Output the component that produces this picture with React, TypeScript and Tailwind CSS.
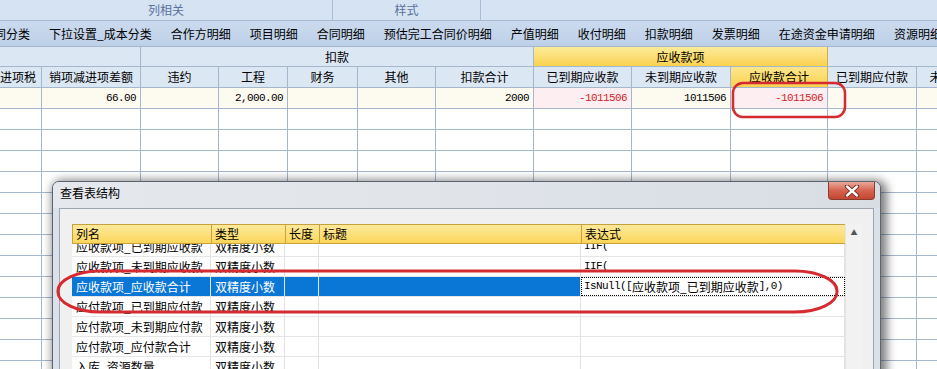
import React from 'react'

const tabs = ['合同分类', '下拉设置_成本分类', '合作方明细', '项目明细', '合同明细', '预估完工合同价明细', '产值明细', '收付明细', '扣款明细', '发票明细', '在途资金申请明细', '资源明细']

const colW = ['w-[42px]', 'w-[99px]', 'w-[78px]', 'w-[69px]', 'w-[70px]', 'w-[78px]', 'w-[98px]', 'w-[98px]', 'w-[99px]', 'w-[97px]', 'w-[89px]', 'w-[98px]']

const heads = ['进项税', '销项减进项差额', '违约', '工程', '财务', '其他', '扣款合计', '已到期应收款', '未到期应收款', '应收款合计', '已到期应付款', '未到期应付款']

const dataRow: { v: string; red?: boolean; pink?: boolean }[] = [
  { v: '' },
  { v: '66.00' },
  { v: '' },
  { v: '2,000.00' },
  { v: '' },
  { v: '' },
  { v: '2000' },
  { v: '-1011506', red: true, pink: true },
  { v: '1011506' },
  { v: '-1011506', red: true, pink: true },
  { v: '' },
  { v: '' },
]

const dlgW = ['w-[139px]', 'w-[74px]', 'w-[34px]', 'w-[262px]', 'w-[264px]']

const fields = [
  { name: '应收款项_已到期应收款', expr: 'IIF(' },
  { name: '应收款项_未到期应收款', expr: 'IIF(' },
  { name: '应收款项_应收款合计', expr: 'sel' },
  { name: '应付款项_已到期应付款', expr: '' },
  { name: '应付款项_未到期应付款', expr: '' },
  { name: '应付款项_应付款合计', expr: '' },
  { name: '入库_资源数量', expr: '' },
]

const mono = "font-['Liberation_Mono',monospace] text-[11px] tracking-[-0.6px]"

function Sheet() {
  return (
    <div className="flex flex-col">
      {/* column group band */}
      <div className="flex h-[20px] bg-[#d6e3f3] text-[#5a729c]">
        <div className="w-[333px] flex items-center justify-center border-r border-[#aabdd6]">列相关</div>
        <div className="w-[148px] flex items-center justify-center border-r border-[#aabdd6]">样式</div>
        <div className="flex-1" />
      </div>

      {/* sheet tabs */}
      <div className="flex items-center gap-[19px] h-[26px] whitespace-nowrap border-t border-[#a4b8d3] bg-gradient-to-b from-[#cbdaee] to-[#bed0e8] text-black">
        {tabs.map((t, i) => (
          <span key={t} className={i === 0 ? 'ml-[-18px] shrink-0' : 'shrink-0'}>{t}</span>
        ))}
      </div>

      {/* group header */}
      <div className="flex h-[21px] bg-[#dce7f4] border-t border-b border-[#a5b7cd]">
        <div className="w-[141px] shrink-0 border-r border-[#a5b7cd]" />
        <div className="w-[393px] shrink-0 border-r border-[#a5b7cd] flex items-center justify-center">扣款</div>
        <div className="w-[294px] shrink-0 border-r border-[#d6ac38] flex items-center justify-center bg-gradient-to-b from-[#fdeb98] to-[#fbd24e]">应收款项</div>
        <div className="flex-1" />
      </div>

      {/* column header */}
      <div className="flex h-[21px] bg-[#dce7f4] border-b border-[#a5b7cd] whitespace-nowrap">
        {heads.map((h, i) => (
          <div
            key={h}
            className={`${colW[i]} shrink-0 flex items-center overflow-hidden border-r ${i === 0 ? 'justify-start border-[#a5b7cd]' : 'justify-center'} ${i === 9 ? 'bg-gradient-to-b from-[#fde68a] to-[#fbd24f] border-[#d6ac38]' : 'border-[#a5b7cd]'}`}
          >
            {h}
          </div>
        ))}
      </div>

      {/* data row */}
      <div className="flex h-[21px] bg-[#fdfaf0] border-b border-[#a5b7cd]">
        {dataRow.map((c, i) => (
          <div
            key={i}
            className={`${colW[i]} shrink-0 flex items-center justify-end pr-[4px] border-r border-[#a5b7cd] ${mono} ${c.pink ? 'bg-[#fdeef2]' : ''} ${c.red ? 'text-[#d41f2b]' : 'text-black'}`}
          >
            {c.v}
          </div>
        ))}
      </div>

      {/* empty rows */}
      {Array.from({ length: 13 }).map((_, r) => (
        <div key={r} className="flex h-[21px] border-b border-[#a5b7cd]">
          {colW.map((w, i) => (
            <div key={i} className={`${w} shrink-0 border-r border-[#a5b7cd]`} />
          ))}
        </div>
      ))}
    </div>
  )
}

function Dialog() {
  return (
    <div className="absolute left-[52px] top-[181px] w-[829px] h-[210px] flex flex-col rounded-t-[7px] border border-[#5b6470] bg-[#dbe1e8] shadow-[3px_2px_10px_3px_rgba(0,0,0,0.5)]">
      {/* title bar */}
      <div className="h-[26px] flex items-start justify-between rounded-t-[6px] bg-gradient-to-r from-[#e5e8ec] via-[#e0e4e9] to-[#d8dde4]">
        <span className="ml-[7px] mt-[5px] text-black">查看表结构</span>
        <div className="mr-[5px] w-[47px] h-[18px] flex items-center justify-center rounded-b-[4px] border border-t-0 border-[#8d3a2e] bg-gradient-to-b from-[#e9a99b] via-[#d5634f] to-[#c24532]">
          <svg width="16" height="12" viewBox="0 0 16 12">
            <path d="M3 1.5 L13 10.5 M13 1.5 L3 10.5" stroke="#6b2418" strokeWidth="4.2" strokeLinecap="round" />
            <path d="M3 1.5 L13 10.5 M13 1.5 L3 10.5" stroke="#ffffff" strokeWidth="2.4" strokeLinecap="round" />
          </svg>
        </div>
      </div>

      {/* content */}
      <div className="flex-1 mx-[6px] border border-[#9ca5b0] bg-[#f0f0f0] pl-[12px] pr-[11px] pt-[15px]">
        <div className="flex h-full bg-white">
          <div className="w-[773px] flex flex-col overflow-hidden">
            <div className="flex h-[20px] shrink-0 bg-gradient-to-b from-[#fde99a] to-[#fcd659] border border-r-0 border-[#c8a13c]">
              {['列名', '类型', '长度', '标题', '表达式'].map((h, i) => (
                <div key={h} className={`${dlgW[i]} shrink-0 flex items-center pl-[3px] border-r border-[#c8a13c] ${i === 0 ? 'w-[138px]' : ''}`}>
                  {h}
                </div>
              ))}
            </div>
            <div className="flex-1 overflow-hidden">
              <div className="mt-[-7px]">
                {fields.map((f) => {
                  const sel = f.expr === 'sel'
                  return (
                    <div key={f.name} className="flex h-[20px] border-b border-[#e6e6e6] whitespace-nowrap">
                      <div className={`${dlgW[0]} shrink-0 flex items-center pl-[4px] border-r ${sel ? 'bg-[#0a76d5] text-white border-[#dfe9f4]' : 'border-[#e2e2e2]'}`}>{f.name}</div>
                      <div className={`${dlgW[1]} shrink-0 flex items-center pl-[4px] border-r ${sel ? 'bg-[#0a76d5] text-white border-[#dfe9f4]' : 'border-[#e2e2e2]'}`}>双精度小数</div>
                      <div className={`${dlgW[2]} shrink-0 border-r ${sel ? 'bg-[#0a76d5] border-[#dfe9f4]' : 'border-[#e2e2e2]'}`} />
                      <div className={`${dlgW[3]} shrink-0 border-r ${sel ? 'bg-[#0a76d5] border-[#dfe9f4]' : 'border-[#e2e2e2]'}`} />
                      {sel ? (
                        <div className={`${dlgW[4]} shrink-0 flex items-center pl-[2px] border border-dotted border-black`}>
                          <span className={mono}>IsNull([</span>
                          <span>应收款项_已到期应收款</span>
                          <span className={mono}>],0)</span>
                        </div>
                      ) : (
                        <div className={`${dlgW[4]} shrink-0 flex items-center pl-[3px] border-r border-[#e2e2e2]`}>
                          <span className={mono}>{f.expr}</span>
                        </div>
                      )}
                    </div>
                  )
                })}
              </div>
            </div>
          </div>
          {/* scrollbar */}
          <div className="w-[17px] flex flex-col bg-[#f2f2f2] border-l border-[#e4e4e4]">
            <div className="h-[17px] flex items-center justify-center text-[7px] text-[#555] leading-none">▲</div>
          </div>
        </div>
      </div>
    </div>
  )
}

export default function App() {
  return (
    <div className="relative w-[937px] h-[369px] overflow-hidden bg-white text-[12px] leading-none text-black font-['Noto_Sans_CJK_SC',sans-serif]">
      <Sheet />
      <Dialog />
      <svg className="absolute left-0 top-0 pointer-events-none" width="937" height="369" viewBox="0 0 937 369">
        <rect x="733" y="83" width="112" height="34" rx="10" fill="none" stroke="#d42a30" strokeWidth="2.5" />
        <rect x="58" y="271" width="779" height="41" rx="42" ry="20" fill="none" stroke="#d42a30" strokeWidth="3" />
      </svg>
    </div>
  )
}
